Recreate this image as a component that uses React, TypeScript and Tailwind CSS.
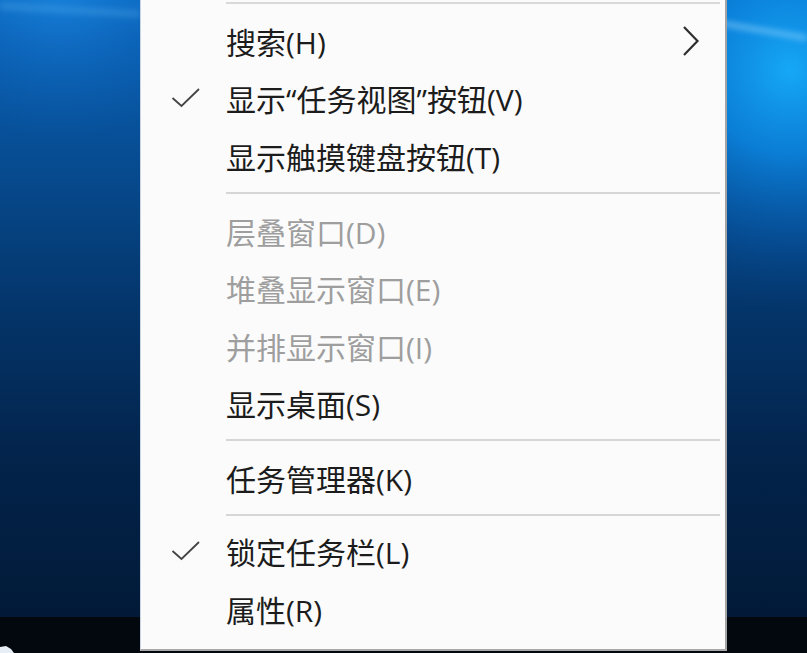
import React from "react";

type Item =
  | { type: "sep"; tight?: boolean }
  | { type: "item"; label: string; checked?: boolean; disabled?: boolean; sub?: boolean };

const items: Item[] = [
  { type: "item", label: "搜索(H)", sub: true },
  { type: "item", label: "显示“任务视图”按钮(V)", checked: true },
  { type: "item", label: "显示触摸键盘按钮(T)" },
  { type: "sep" },
  { type: "item", label: "层叠窗口(D)", disabled: true },
  { type: "item", label: "堆叠显示窗口(E)", disabled: true },
  { type: "item", label: "并排显示窗口(I)", disabled: true },
  { type: "item", label: "显示桌面(S)" },
  { type: "sep" },
  { type: "item", label: "任务管理器(K)" },
  { type: "sep", tight: true },
  { type: "item", label: "锁定任务栏(L)", checked: true },
  { type: "item", label: "属性(R)" },
];

function Wallpaper() {
  return (
    <svg className="absolute inset-0" width="807" height="617" viewBox="0 0 807 617">
      <defs>
        <linearGradient id="base" x1="0" y1="0" x2="0" y2="1">
          <stop offset="0" stopColor="#0c6cc6" />
          <stop offset="0.06" stopColor="#0a5fb3" />
          <stop offset="0.25" stopColor="#074d93" />
          <stop offset="0.5" stopColor="#04356a" />
          <stop offset="0.75" stopColor="#03234a" />
          <stop offset="1" stopColor="#021a38" />
        </linearGradient>
        <radialGradient id="glowR" cx="790" cy="70" r="240" gradientUnits="userSpaceOnUse">
          <stop offset="0" stopColor="#16a8f7" stopOpacity="1" />
          <stop offset="0.35" stopColor="#0b86e0" stopOpacity="0.85" />
          <stop offset="0.7" stopColor="#0762b8" stopOpacity="0.4" />
          <stop offset="1" stopColor="#05448a" stopOpacity="0" />
        </radialGradient>
        <radialGradient id="glowL" cx="60" cy="-20" r="160" gradientUnits="userSpaceOnUse">
          <stop offset="0" stopColor="#1a86e0" stopOpacity="0.9" />
          <stop offset="1" stopColor="#0a5fb3" stopOpacity="0" />
        </radialGradient>
        <filter id="blur" x="-20%" y="-200%" width="140%" height="500%">
          <feGaussianBlur stdDeviation="3" />
        </filter>
      </defs>
      <rect width="807" height="617" fill="url(#base)" />
      <rect width="807" height="617" fill="url(#glowR)" />
      <rect width="807" height="617" fill="url(#glowL)" />
      <path d="M690 18 L807 38" stroke="#9ad8ff" strokeOpacity="0.7" strokeWidth="4" filter="url(#blur)" />
      <path d="M0 6 L140 14" stroke="#5fb4f0" strokeOpacity="0.35" strokeWidth="6" filter="url(#blur)" />
    </svg>
  );
}

function Check() {
  return (
    <svg width="30" height="22" viewBox="0 0 30 22" className="-mt-[5px]">
      <polyline points="1.5,11 10.5,19 28,2" fill="none" stroke="#444444" strokeWidth="1.8" />
    </svg>
  );
}

function Chevron() {
  return (
    <svg width="18" height="32" viewBox="0 0 18 32" className="-mt-[4px]">
      <polyline points="2,2 15.5,16 2,30" fill="none" stroke="#2e2e2e" strokeWidth="2.2" />
    </svg>
  );
}

export default function App() {
  return (
    <div className="relative w-[807px] h-[653px] overflow-hidden flex flex-col bg-[#021a38]">
      <div className="relative flex-1">
        <Wallpaper />
      </div>
      <div className="relative h-[36px] bg-[#03070e]">
        <svg className="absolute left-0 bottom-0" width="16" height="10" viewBox="0 0 16 10">
          <path d="M0 4 L6 3 L11 6 L14 10 L0 10 Z" fill="#e8eef5" />
        </svg>
      </div>

      <div className="absolute left-[140px] top-0 w-[587px] h-[651px] bg-[#fbfbfb] border-l border-l-[#c9d6e2] border-r-2 border-r-[#a3a3a3] border-b-2 border-b-[#a8a8a8] font-['Open_Sans','Noto_Sans_CJK_SC',sans-serif] text-[30px]">
        <div className="ml-[85px] mr-[5px] mt-[2px] h-[2px] bg-[#d9d9d9]" />
        <div className="h-[10px]" />
        {items.map((it, i) =>
          it.type === "sep" ? (
            <div key={i} className={it.tight ? "pt-[5px] pb-[8.5px]" : "pt-[5px] pb-[10.5px]"}>
              <div className="ml-[85px] mr-[5px] h-[2px] bg-[#d6d6d6]" />
            </div>
          ) : (
            <div key={i} className="flex items-center h-[57.5px]">
              <div className="w-[85px] pl-[30px] flex items-center">{it.checked ? <Check /> : null}</div>
              <div className={`flex-1 leading-none whitespace-nowrap ${it.disabled ? "text-[#9e9e9e]" : "text-[#1c1c1c]"}`}>
                {it.label}
              </div>
              <div className="w-[60px] flex items-center justify-end pr-[25px]">{it.sub ? <Chevron /> : null}</div>
            </div>
          )
        )}
      </div>
    </div>
  );
}
